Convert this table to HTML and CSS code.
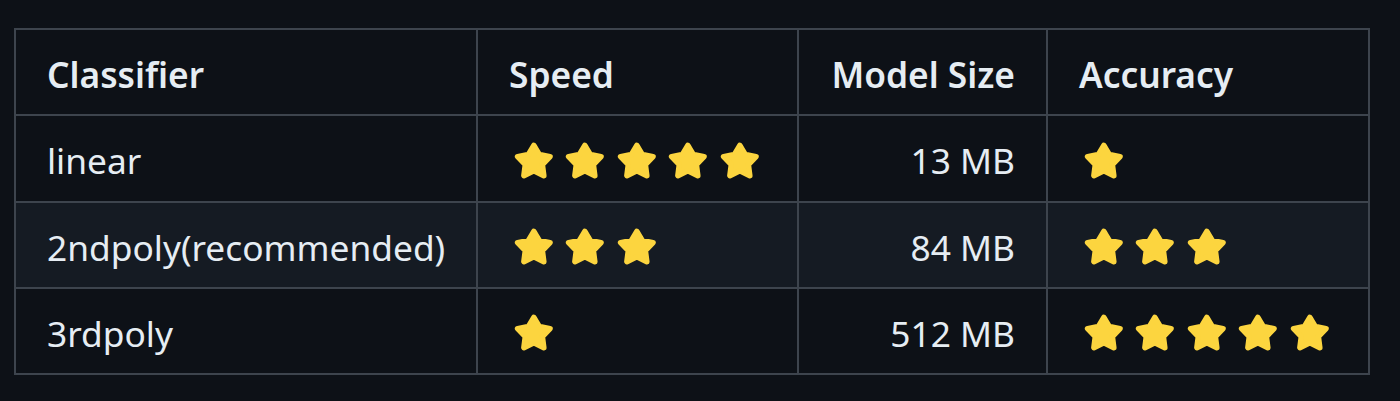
FILE: index.html
```html
<!DOCTYPE html>
<html lang="en">
<head>
<meta charset="utf-8">
<title>Classifier table</title>
<link rel="stylesheet" href="styles.css">
</head>
<body>
<svg class="defs" width="0" height="0" aria-hidden="true">
  <defs>
    <symbol id="star" viewBox="0 0 38 36">
      <polygon points="19,4 23.9,12.3 33.8,14.2 26.8,21.5 28.1,31.6 19,27.2 9.9,31.6 11.2,21.5 4.2,14.2 14.1,12.3" fill="#fcd53f" stroke="#fcd53f" stroke-width="5" stroke-linejoin="round"/>
    </symbol>
  </defs>
</svg>
<table class="grid">
  <colgroup>
    <col class="c1"><col class="c2"><col class="c3"><col class="c4">
  </colgroup>
  <thead>
    <tr>
      <th>Classifier</th>
      <th>Speed</th>
      <th class="num">Model Size</th>
      <th>Accuracy</th>
    </tr>
  </thead>
  <tbody>
    <tr>
      <td>linear</td>
      <td><span class="stars"><svg class="star"><use href="#star"/></svg><svg class="star"><use href="#star"/></svg><svg class="star"><use href="#star"/></svg><svg class="star"><use href="#star"/></svg><svg class="star"><use href="#star"/></svg></span></td>
      <td class="num">13 MB</td>
      <td><span class="stars"><svg class="star"><use href="#star"/></svg></span></td>
    </tr>
    <tr class="alt">
      <td>2ndpoly(recommended)</td>
      <td><span class="stars"><svg class="star"><use href="#star"/></svg><svg class="star"><use href="#star"/></svg><svg class="star"><use href="#star"/></svg></span></td>
      <td class="num">84 MB</td>
      <td><span class="stars"><svg class="star"><use href="#star"/></svg><svg class="star"><use href="#star"/></svg><svg class="star"><use href="#star"/></svg></span></td>
    </tr>
    <tr>
      <td>3rdpoly</td>
      <td><span class="stars"><svg class="star"><use href="#star"/></svg></span></td>
      <td class="num">512 MB</td>
      <td><span class="stars"><svg class="star"><use href="#star"/></svg><svg class="star"><use href="#star"/></svg><svg class="star"><use href="#star"/></svg><svg class="star"><use href="#star"/></svg><svg class="star"><use href="#star"/></svg></span></td>
    </tr>
  </tbody>
</table>
</body>
</html>
```
FILE: styles.css
```css
html, body {
  margin: 0;
  background: #0d1117;
}
body {
  padding: 28px 0 0 14px;
  color: #e6edf3;
  font-family: "Noto Sans", "Open Sans", sans-serif;
  font-size: 35.3px;
}
.defs {
  position: absolute;
  width: 0;
  height: 0;
}
.grid {
  border-collapse: collapse;
  table-layout: fixed;
  width: 1354px;
}
.c1 { width: 462px; }
.c2 { width: 321px; }
.c3 { width: 249px; }
.c4 { width: 322px; }
.grid th,
.grid td {
  border: 2px solid #3d444d;
  padding: 17px 31px 13px;
  line-height: 54.3px;
  text-align: left;
  white-space: nowrap;
}
.grid th {
  font-weight: 600;
}
.grid .num {
  text-align: right;
}
.alt {
  background: #151b23;
}
.stars {
  display: flex;
  align-items: center;
  gap: 9.8px;
  padding-left: 4px;
  height: 54px;
}
.star {
  width: 41.7px;
  height: 39.5px;
  flex: none;
}
```
